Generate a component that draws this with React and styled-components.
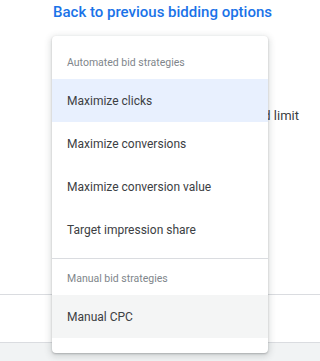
import React from "react";
import styled, { createGlobalStyle } from "styled-components";

const GlobalStyle = createGlobalStyle`
  body {
    margin: 0;
    background: #fff;
    font-family: Roboto, "Liberation Sans", Arial, sans-serif;
  }
`;

const sections = [
  {
    title: "Automated bid strategies",
    items: [
      { label: "Maximize clicks", state: "selected" },
      { label: "Maximize conversions" },
      { label: "Maximize conversion value" },
      { label: "Target impression share" },
    ],
  },
  {
    title: "Manual bid strategies",
    items: [{ label: "Manual CPC", state: "hover" }],
  },
];

function App() {
  return (
    <>
      <GlobalStyle />
      <Page>
        <Settings>
          <BackLink href="#">Back to previous bidding options</BackLink>
          <LimitRow>Maximum CPC bid limit</LimitRow>
        </Settings>
        <Gap />
        <Footer />

        <Menu>
          {sections.map((section, i) => (
            <Section key={section.title} $divided={i > 0}>
              <SectionTitle>{section.title}</SectionTitle>
              {section.items.map((item) => (
                <Option key={item.label} $state={item.state}>
                  {item.label}
                </Option>
              ))}
            </Section>
          ))}
        </Menu>
      </Page>
    </>
  );
}

const Page = styled.div`
  position: relative;
  height: 361px;
  overflow: hidden;
  display: flex;
  flex-direction: column;
`;

const Settings = styled.div`
  height: 294px;
  border-bottom: 1px solid #dadce0;
  display: flex;
  flex-direction: column;
`;

const BackLink = styled.a`
  display: block;
  padding: 2px 0 0 53px;
  font-size: 15px;
  line-height: 20px;
  font-weight: 500;
  color: #1a73e8;
  text-decoration: none;
  white-space: nowrap;
`;

const LimitRow = styled.div`
  margin-top: 84px;
  padding-right: 21px;
  text-align: right;
  font-size: 13px;
  line-height: 20px;
  color: #3c4043;
`;

const Gap = styled.div`
  height: 47px;
`;

const Footer = styled.div`
  flex: 1;
  background: #f1f3f4;
  border-top: 1px solid #dadce0;
`;

const Menu = styled.div`
  position: absolute;
  top: 36px;
  left: 52px;
  width: 216px;
  padding: 7px 0 15px;
  background: #fff;
  border-radius: 4px;
  box-shadow: 0 1px 2px 0 rgba(60, 64, 67, 0.3),
    0 2px 6px 2px rgba(60, 64, 67, 0.15);
`;

const Section = styled.div`
  border-top: ${(p) => (p.$divided ? "1px solid #dadce0" : "none")};
  padding-bottom: ${(p) => (p.$divided ? "0" : "7px")};
`;

const SectionTitle = styled.div`
  padding: 12px 15px 8px;
  font-size: 10.5px;
  line-height: 16px;
  color: #80868b;
`;

const optionBg = {
  selected: "#e8f0fe",
  hover: "#f4f5f5",
};

const Option = styled.div`
  height: 43px;
  display: flex;
  align-items: center;
  padding: 0 15px;
  font-size: 12px;
  color: #3c4043;
  background: ${(p) => optionBg[p.$state] || "transparent"};
`;

export default App;
